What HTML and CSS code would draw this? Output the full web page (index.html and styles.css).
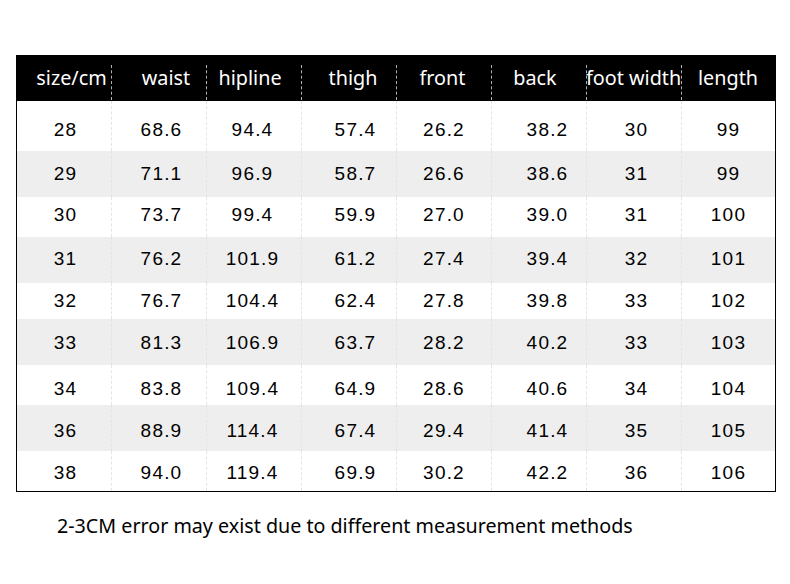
FILE: index.html
```html
<!DOCTYPE html>
<html>
<head>
<meta charset="utf-8">
<link rel="stylesheet" href="styles.css">
</head>
<body>
<div class="page">
  <div class="table">
    <div class="head">
      <div class="hc">size/cm</div><div class="hc">waist</div><div class="hc">hipline</div><div class="hc">thigh</div><div class="hc">front</div><div class="hc">back</div><div class="hc">foot width</div><div class="hc">length</div>
    </div>
    <div class="row r1"><div class="c">28</div><div class="c">68.6</div><div class="c">94.4</div><div class="c">57.4</div><div class="c">26.2</div><div class="c">38.2</div><div class="c">30</div><div class="c">99</div></div>
    <div class="row r2 gray"><div class="c">29</div><div class="c">71.1</div><div class="c">96.9</div><div class="c">58.7</div><div class="c">26.6</div><div class="c">38.6</div><div class="c">31</div><div class="c">99</div></div>
    <div class="row r3"><div class="c">30</div><div class="c">73.7</div><div class="c">99.4</div><div class="c">59.9</div><div class="c">27.0</div><div class="c">39.0</div><div class="c">31</div><div class="c">100</div></div>
    <div class="row r4 gray"><div class="c">31</div><div class="c">76.2</div><div class="c">101.9</div><div class="c">61.2</div><div class="c">27.4</div><div class="c">39.4</div><div class="c">32</div><div class="c">101</div></div>
    <div class="row r5"><div class="c">32</div><div class="c">76.7</div><div class="c">104.4</div><div class="c">62.4</div><div class="c">27.8</div><div class="c">39.8</div><div class="c">33</div><div class="c">102</div></div>
    <div class="row r6 gray"><div class="c">33</div><div class="c">81.3</div><div class="c">106.9</div><div class="c">63.7</div><div class="c">28.2</div><div class="c">40.2</div><div class="c">33</div><div class="c">103</div></div>
    <div class="row r7"><div class="c">34</div><div class="c">83.8</div><div class="c">109.4</div><div class="c">64.9</div><div class="c">28.6</div><div class="c">40.6</div><div class="c">34</div><div class="c">104</div></div>
    <div class="row r8 gray"><div class="c">36</div><div class="c">88.9</div><div class="c">114.4</div><div class="c">67.4</div><div class="c">29.4</div><div class="c">41.4</div><div class="c">35</div><div class="c">105</div></div>
    <div class="row r9"><div class="c">38</div><div class="c">94.0</div><div class="c">119.4</div><div class="c">69.9</div><div class="c">30.2</div><div class="c">42.2</div><div class="c">36</div><div class="c">106</div></div>
  </div>
  <p class="note">2-3CM error may exist due to different measurement methods</p>
</div>
</body>
</html>
```

FILE: styles.css
```css
html, body {
  margin: 0;
  padding: 0;
  background: #ffffff;
}

.page {
  padding: 55px 0 0 16px;
}

.table {
  width: 758px;
  border: 1px solid #000;
}

.head,
.row {
  display: grid;
  grid-template-columns: 94px repeat(6, 95px) 94px;
}

.head {
  background: #000;
  height: 45px;
}

.hc {
  position: relative;
  color: #fff;
  font-family: "Noto Sans", "Open Sans", sans-serif;
  font-size: 19.8px;
  line-height: 46px;
  text-align: center;
  white-space: nowrap;
  margin-top: -1px;
}

.hc + .hc::before {
  content: "";
  position: absolute;
  left: 0;
  top: 10px;
  bottom: 1px;
  border-left: 1px dashed #b0b0b0;
}

.head .hc:nth-child(1) { padding-left: 15px; }
.head .hc:nth-child(2) { padding-left: 15px; }
.head .hc:nth-child(3) { padding-right: 7px; }
.head .hc:nth-child(4) { padding-left: 9px; }
.head .hc:nth-child(5) { padding-right: 2px; }
.head .hc:nth-child(6) { padding-right: 7px; }
.head .hc:nth-child(7) { padding-right: 3px; }

.row {
  background: #fff;
}

.row.gray {
  background: #eeeeee;
}

.c {
  font-family: "Liberation Sans", Arial, sans-serif;
  font-size: 19px;
  line-height: 20px;
  letter-spacing: 1.2px;
  color: #000;
  text-align: center;
  white-space: nowrap;
}

.c + .c {
  border-left: 1px dashed #e4e4e4;
}

.row .c:nth-child(1) { padding-left: 3px; }
.row .c:nth-child(2) { padding-left: 5px; }
.row .c:nth-child(3) { padding-right: 3px; }
.row .c:nth-child(4) { padding-left: 13px; }
.row .c:nth-child(6) { padding-left: 17px; }
.row .c:nth-child(7) { padding-left: 5px; }

.r1 { height: 50px; }
.r1 .c { padding-top: 19px; }
.r2 { height: 46px; }
.r2 .c { padding-top: 13px; }
.r3 { height: 40px; }
.r3 .c { padding-top: 8px; }
.r4 { height: 46px; }
.r4 .c { padding-top: 12px; }
.r5 { height: 36px; }
.r5 .c { padding-top: 8px; }
.r6 { height: 46px; }
.r6 .c { padding-top: 14px; }
.r7 { height: 40px; }
.r7 .c { padding-top: 14px; }
.r8 { height: 46px; }
.r8 .c { padding-top: 16px; }
.r9 { height: 40px; }
.r9 .c { padding-top: 12px; }

.note {
  margin: 21px 0 0 41px;
  font-family: "Noto Sans", "Open Sans", sans-serif;
  font-size: 19.7px;
  line-height: 26px;
  color: #000;
}
```
